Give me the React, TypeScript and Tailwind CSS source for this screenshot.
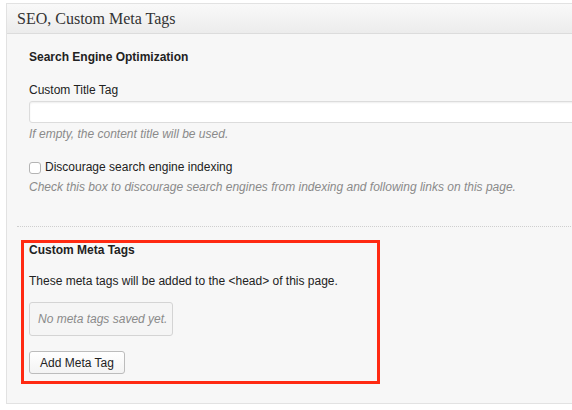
import React from "react";

export default function App() {
  return (
    <div className="w-[572px] h-[410px] overflow-hidden bg-white" style={{ fontFamily: '"Liberation Sans", Arial, sans-serif' }}>
      <div className="mt-[3px] ml-[6px] w-[600px] border border-[#e2e2e2] bg-[#f7f7f7]">
        <div className="h-[30px] border-b border-[#dcdcdc] bg-gradient-to-b from-[#f9f9f9] to-[#ececec] pl-[10px] flex items-center">
          <span className="text-[16px] leading-[20px] text-[#333]" style={{ fontFamily: '"Liberation Serif", Georgia, serif' }}>
            SEO, Custom Meta Tags
          </span>
        </div>
        <div className="pt-[15px]">
          <div className="px-[22px]">
            <div className="text-[12px] leading-[16px] font-bold text-[#222]">Search Engine Optimization</div>
            <div className="mt-[17px] text-[12px] leading-[16px] text-[#222]">Custom Title Tag</div>
            <input
              type="text"
              className="mt-[3px] block h-[22px] w-[560px] rounded-[3px] border border-[#dcdcdc] bg-white shadow-[inset_0_1px_2px_rgba(0,0,0,0.07)]"
            />
            <div className="mt-[3px] text-[12px] leading-[16px] italic text-[#8a8a8a]">If empty, the content title will be used.</div>
            <label className="mt-[17px] flex items-center h-[16px] text-[12px] leading-[16px] text-[#222]">
              <span className="block w-[12px] h-[12px] rounded-[3px] border border-[#b4b4b4] bg-white mt-[1px]" />
              <span className="ml-[4px]">Discourage search engine indexing</span>
            </label>
            <div className="mt-[4px] text-[12px] leading-[16px] italic text-[#8a8a8a]">
              Check this box to discourage search engines from indexing and following links on this page.
            </div>
          </div>
          <div className="mt-[31px] ml-[10px] border-t border-dotted border-[#cfcfcf]" />
          <div className="mt-[13px] ml-[14px] w-[359px] border-[3px] border-[#ff2a12] pl-[5px] pb-[7px]">
            <div className="text-[12px] leading-[14px] font-bold text-[#222]">Custom Meta Tags</div>
            <div className="mt-[16px] text-[12px] leading-[16px] text-[#222]">These meta tags will be added to the &lt;head&gt; of this page.</div>
            <div className="mt-[13px] w-[144px] h-[34px] rounded-[3px] border border-[#d4d4d4] bg-[#f5f5f5] flex items-center pl-[8px] text-[12px] italic whitespace-nowrap text-[#8a8a8a]">
              No meta tags saved yet.
            </div>
            <button className="mt-[15px] h-[23px] w-[96px] rounded-[3px] border border-[#bcbcbc] bg-gradient-to-b from-white to-[#f3f3f3] text-[12px] text-[#222] flex items-center justify-center">
              Add Meta Tag
            </button>
          </div>
          <div className="h-[19px]" />
        </div>
      </div>
    </div>
  );
}
